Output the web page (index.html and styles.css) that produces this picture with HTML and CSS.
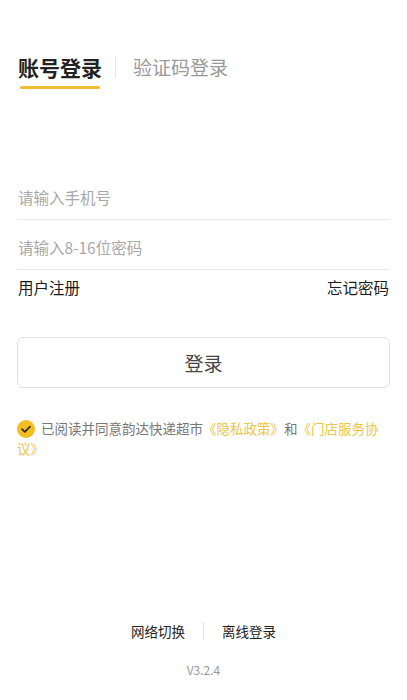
FILE: index.html
```html
<!DOCTYPE html>
<html>
<head>
<meta charset="utf-8">
<link rel="stylesheet" href="styles.css">
</head>
<body>
<div class="page">
  <div class="tabs">
    <div class="tab active">账号登录</div>
    <div class="tab-sep"></div>
    <div class="tab">验证码登录</div>
  </div>

  <form class="form">
    <div class="field"><input type="text" placeholder="请输入手机号"></div>
    <div class="field"><input type="password" placeholder="请输入8-16位密码"></div>
    <div class="links">
      <a>用户注册</a>
      <a>忘记密码</a>
    </div>
    <button type="button" class="btn">登录</button>
  </form>

  <p class="agree">
    <span class="check"><svg viewBox="0 0 18 18" width="18" height="18"><circle cx="9" cy="9" r="9" fill="#f2be22"/><path d="M5 9.2l2.8 2.7L13 6.6" fill="none" stroke="#3a2e10" stroke-width="1.8" stroke-linecap="round" stroke-linejoin="round"/></svg></span>已阅读并同意韵达快递超市<a>《隐私政策》</a>和<a>《门店服务协议》</a>
  </p>

  <div class="bottom">
    <div class="bottom-links">
      <a>网络切换</a>
      <span class="bottom-sep"></span>
      <a>离线登录</a>
    </div>
    <div class="version">V3.2.4</div>
  </div>
</div>
</body>
</html>
```

FILE: styles.css
```css
html, body {
    margin: 0;
    background: #fff;
}

body {
    font-family: "Noto Sans CJK SC", "Noto Sans", sans-serif;
    color: #222;
}

.page {
    height: 700px;
    padding: 0 17px;
    box-sizing: border-box;
    display: flex;
    flex-direction: column;
}

/* tabs */
.tabs {
    display: flex;
    align-items: center;
    margin-top: 52px;
}
.tab {
    font-size: 19px;
    color: #999;
    line-height: 30px;
}
.tab.active {
    font-size: 21px;
    font-weight: bold;
    color: #222;
    padding: 0 1px;
    position: relative;
}
.tab.active::after {
    content: "";
    position: absolute;
    left: 3px;
    right: 3px;
    bottom: -7px;
    height: 3px;
    border-radius: 2px;
    background: #f0c032;
}
.tab-sep {
    width: 1px;
    height: 22px;
    background: #e6e6e6;
    margin: 0 17px 0 12px;
}

/* form */
.form {
    margin-top: 88px;
}
.field {
    border-bottom: 1px solid #e8e8e8;
    height: 50px;
    box-sizing: border-box;
    padding-bottom: 11px;
    display: flex;
    align-items: flex-end;
}
.field input {
    border: 0;
    outline: 0;
    padding: 0 1px;
    width: 100%;
    font-family: inherit;
    font-size: 15.5px;
    line-height: 22px;
    color: #222;
    background: transparent;
}
.field input::placeholder {
    color: #a8a8a8;
}

.links {
    display: flex;
    justify-content: space-between;
    font-size: 15.5px;
    color: #1a1a1a;
    line-height: 34px;
    padding: 0 1px;
}

.btn {
    display: block;
    width: 100%;
    height: 51px;
    margin-top: 33px;
    border: 1px solid #e0e0e0;
    border-radius: 6px;
    background: #fff;
    font-family: inherit;
    font-size: 19px;
    color: #444;
}

/* agreement */
.agree {
    margin: 30px 0 0;
    font-size: 13.5px;
    line-height: 20px;
    color: #777;
}
.agree a {
    color: #eec544;
}
.check {
    display: inline-block;
    width: 18px;
    height: 18px;
    vertical-align: -4px;
    margin-right: 6px;
}
.check svg {
    display: block;
}

/* bottom */
.bottom {
    margin-top: auto;
    padding-bottom: 21px;
    text-align: center;
}
.bottom-links {
    display: flex;
    justify-content: center;
    align-items: center;
    font-size: 13.5px;
    color: #222;
    line-height: 20px;
}
.bottom-sep {
    width: 1px;
    height: 18px;
    background: #e6e6e6;
    margin: 0 18px;
}
.version {
    margin-top: 20px;
    font-size: 12px;
    color: #999;
    line-height: 18px;
}
```
